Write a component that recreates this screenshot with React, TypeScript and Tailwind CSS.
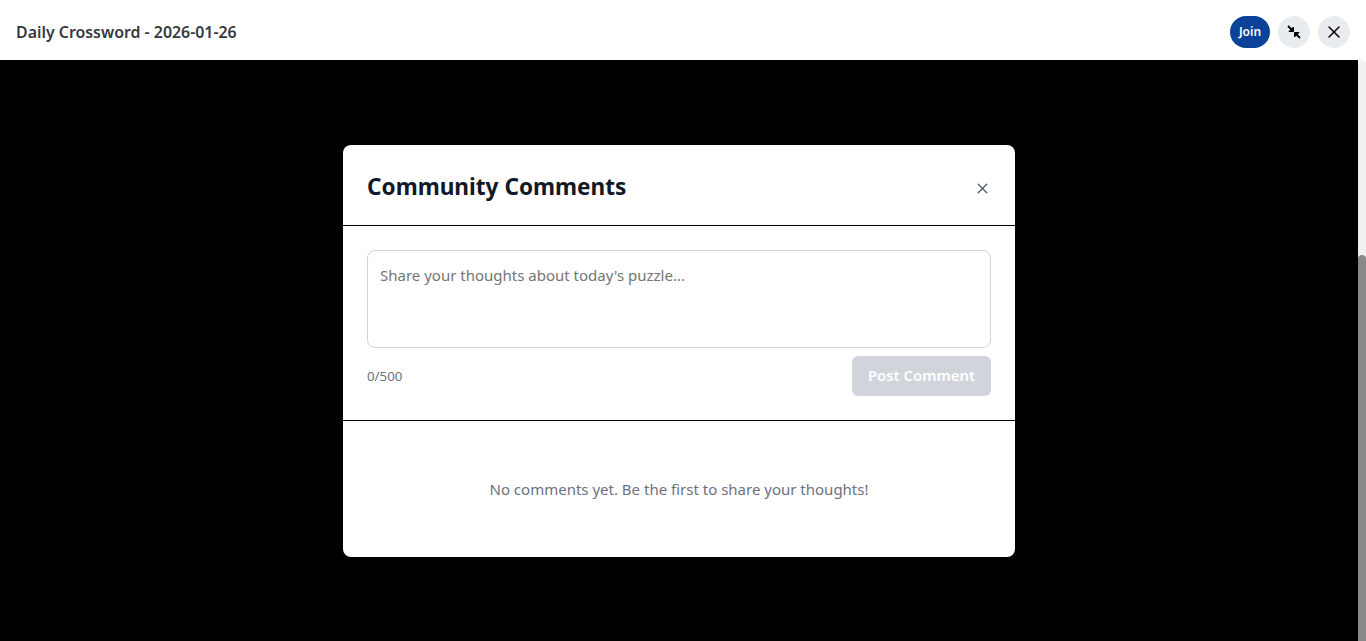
import { X } from "lucide-react";

const FONT = "font-['Noto_Sans',sans-serif]";

export default function App() {
  return (
    <div className={`${FONT} h-[641px] w-full flex flex-col overflow-hidden bg-white`}>
      {/* Top bar */}
      <header className="h-[60px] bg-white flex items-center justify-between pl-4 pr-4 pt-1 shrink-0">
        <h1 className="mt-0.5 text-[15.9px] font-semibold text-[#343a40]">Daily Crossword - 2026-01-26</h1>
        <div className="flex items-center gap-2">
          <button className="w-10 h-8 rounded-full bg-[#0a4399] text-white text-xs font-semibold">Join</button>
          <button className="w-8 h-8 rounded-full bg-[#e9ecef] flex items-center justify-center text-black">
            <svg width="14" height="14" viewBox="0 0 14 14" fill="none" stroke="currentColor" strokeWidth="1.8">
              <path d="M1 1 L6 6" />
              <path d="M6.5 2 V6.5 H2 Z" fill="currentColor" strokeWidth="1" />
              <path d="M13 13 L8 8" />
              <path d="M7.5 12 V7.5 H12 Z" fill="currentColor" strokeWidth="1" />
            </svg>
          </button>
          <button className="w-8 h-8 rounded-full bg-[#e9ecef] flex items-center justify-center text-black">
            <X size={20} strokeWidth={1.75} />
          </button>
        </div>
      </header>

      <div className="flex-1 flex min-h-0">
        {/* Overlay */}
        <main className="flex-1 bg-black flex items-center justify-center">
          <div className="w-[672px] bg-white rounded-lg overflow-hidden">
            <div className="h-[81px] px-6 pt-1 flex items-center justify-between border-b border-black">
              <h2 className="text-[22.6px] font-bold text-[#111827]">Community Comments</h2>
              <button className="text-[#4b5563] mt-1">
                <X size={17} strokeWidth={1.8} />
              </button>
            </div>

            <div className="p-6 border-b border-black">
              <textarea
                readOnly
                placeholder="Share your thoughts about today's puzzle..."
                className="block w-full h-[98px] resize-none rounded-lg border border-[#d1d5db] px-3 py-3 text-[15px] leading-6 text-[#111827] placeholder:text-[#757575] outline-none"
              />
              <div className="mt-2 flex items-center justify-between">
                <span className="mt-0.5 text-[13.3px] text-[#6b7280]">0/500</span>
                <button className="h-10 w-[139px] rounded-md bg-[#d1d5db] text-white text-[14.9px] font-semibold">
                  Post Comment
                </button>
              </div>
            </div>

            <div className="h-[136px] pt-0.5 flex items-center justify-center">
              <p className="text-[15px] text-[#6b7280]">No comments yet. Be the first to share your thoughts!</p>
            </div>
          </div>
        </main>

        {/* Scrollbar */}
        <div className="w-2 shrink-0 bg-[#f1f1f1] rounded-t flex flex-col justify-end">
          <div className="h-[386px] bg-[#888888] rounded-t" />
        </div>
      </div>
    </div>
  );
}
